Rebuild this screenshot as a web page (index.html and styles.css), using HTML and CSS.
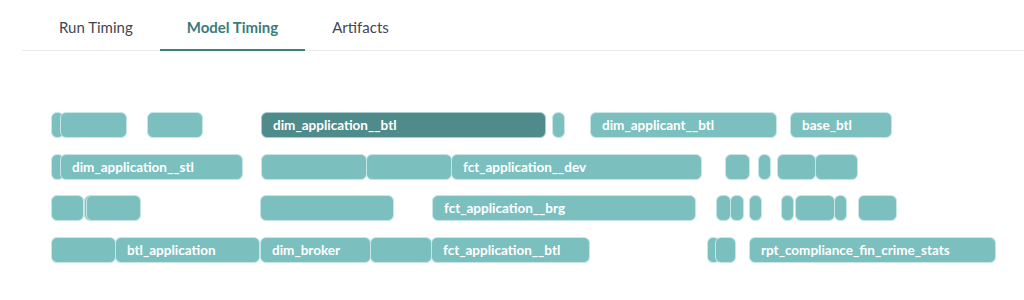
FILE: index.html
```html
<!DOCTYPE html>
<html>
<head>
    <title>Model Timing</title>
    <meta charset="UTF-8">
    <link rel="stylesheet" href="styles.css">
</head>
<body>

    <div class="page">
        <div class="tabs">
            <div class="tab">Run Timing</div>
            <div class="tab active">Model Timing</div>
            <div class="tab">Artifacts</div>
        </div>

        <div class="chart">
            <div class="row">
                <div class="bar" style="left:29px;width:9px;"></div>
                <div class="bar" style="left:38px;width:67px;"></div>
                <div class="bar" style="left:125px;width:56px;"></div>
                <div class="bar dark" style="left:239px;width:285px;">dim_application__btl</div>
                <div class="bar" style="left:530px;width:6px;"></div>
                <div class="bar" style="left:568px;width:187px;">dim_applicant__btl</div>
                <div class="bar" style="left:768px;width:102px;">base_btl</div>
            </div>
            <div class="row">
                <div class="bar" style="left:29px;width:9px;"></div>
                <div class="bar" style="left:38px;width:183px;">dim_application__stl</div>
                <div class="bar" style="left:239px;width:106px;"></div>
                <div class="bar" style="left:344px;width:86px;"></div>
                <div class="bar" style="left:429px;width:251px;">fct_application__dev</div>
                <div class="bar" style="left:703px;width:25px;"></div>
                <div class="bar" style="left:736px;width:11px;"></div>
                <div class="bar" style="left:755px;width:39px;"></div>
                <div class="bar" style="left:793px;width:43px;"></div>
            </div>
            <div class="row">
                <div class="bar" style="left:29px;width:33px;"></div>
                <div class="bar" style="left:62px;width:2px;"></div>
                <div class="bar" style="left:64px;width:55px;"></div>
                <div class="bar" style="left:238px;width:134px;"></div>
                <div class="bar" style="left:410px;width:264px;">fct_application__brg</div>
                <div class="bar" style="left:694px;width:15px;"></div>
                <div class="bar" style="left:708px;width:14px;"></div>
                <div class="bar" style="left:727px;width:9px;"></div>
                <div class="bar" style="left:759px;width:6px;"></div>
                <div class="bar" style="left:773px;width:40px;"></div>
                <div class="bar" style="left:812px;width:9px;"></div>
                <div class="bar" style="left:836px;width:39px;"></div>
            </div>
            <div class="row">
                <div class="bar" style="left:29px;width:65px;"></div>
                <div class="bar" style="left:93px;width:145px;">btl_application</div>
                <div class="bar" style="left:238px;width:111px;">dim_broker</div>
                <div class="bar" style="left:348px;width:62px;"></div>
                <div class="bar" style="left:409px;width:159px;">fct_application__btl</div>
                <div class="bar" style="left:685px;width:9px;"></div>
                <div class="bar" style="left:693px;width:21px;"></div>
                <div class="bar" style="left:727px;width:247px;">rpt_compliance_fin_crime_stats</div>
            </div>
        </div>
    </div>

</body>
</html>
```

FILE: styles.css
```css
body {
    font-family: Lato, "Noto Sans", sans-serif;
    background-color: #ffffff;
    margin: 0;
    padding: 0;
}
.page {
    padding: 0 0 0 22px;
}
.tabs {
    display: flex;
    height: 50px;
    padding-left: 10px;
    border-bottom: 1px solid #e9ecef;
}
.tab {
    box-sizing: border-box;
    height: 51px;
    margin-bottom: -1px;
    padding: 5px 27px 0 27px;
    display: flex;
    align-items: center;
    font-size: 15px;
    color: #3f4654;
    border-bottom: 2px solid transparent;
}
.tab.active {
    color: #3a7c7c;
    font-weight: bold;
    border-bottom-color: #3f7f80;
}
.chart {
    margin-top: 61px;
}
.row {
    position: relative;
    height: 26px;
    margin-bottom: 15.7px;
}
.bar {
    position: absolute;
    top: 0;
    box-sizing: border-box;
    height: 26px;
    padding-left: 11px;
    background-color: #7bbfbf;
    border: 1px solid #c9e6e6;
    border-radius: 6px;
    color: #ffffff;
    font-size: 13.5px;
    font-weight: bold;
    line-height: 24px;
    white-space: nowrap;
    overflow: hidden;
}
.bar.dark {
    background-color: #508b8c;
    border-color: #a9cccc;
}
```
